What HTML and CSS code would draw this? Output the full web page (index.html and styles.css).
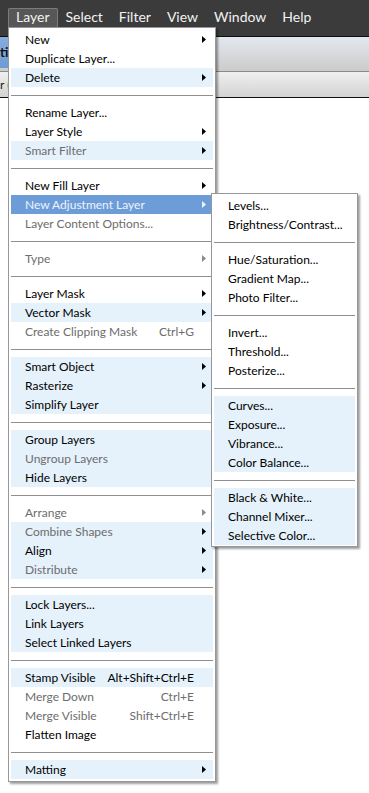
FILE: index.html
```html
<!DOCTYPE html>
<html>
<head>
<meta charset="utf-8">
<link rel="stylesheet" href="styles.css">
</head>
<body>
<div class="app">
  <div class="menubar">
    <span class="mb-item active">Layer</span>
    <span class="mb-item">Select</span>
    <span class="mb-item">Filter</span>
    <span class="mb-item">View</span>
    <span class="mb-item">Window</span>
    <span class="mb-item">Help</span>
  </div>
  <div class="tabbar"><span class="doc-tab">ti</span></div>
  <div class="optbar"><span class="opt-text">r (</span></div>
  <div class="canvas"></div>
</div>

<div class="menu main-menu">
  <div class="item"><span class="label">New</span><svg class="arr" viewBox="0 0 4 7"><polygon points="0,0 4,3.5 0,7"/></svg></div>
  <div class="item"><span class="label">Duplicate Layer...</span><span class="arr-space"></span></div>
  <div class="item bg"><span class="label">Delete</span><svg class="arr" viewBox="0 0 4 7"><polygon points="0,0 4,3.5 0,7"/></svg></div>
  <div class="sep"></div>
  <div class="item"><span class="label">Rename Layer...</span><span class="arr-space"></span></div>
  <div class="item"><span class="label">Layer Style</span><svg class="arr" viewBox="0 0 4 7"><polygon points="0,0 4,3.5 0,7"/></svg></div>
  <div class="item bg dis"><span class="label">Smart Filter</span><svg class="arr" viewBox="0 0 4 7"><polygon points="0,0 4,3.5 0,7"/></svg></div>
  <div class="sep"></div>
  <div class="item"><span class="label">New Fill Layer</span><svg class="arr" viewBox="0 0 4 7"><polygon points="0,0 4,3.5 0,7"/></svg></div>
  <div class="item hl"><span class="label">New Adjustment Layer</span><svg class="arr" viewBox="0 0 4 7"><polygon points="0,0 4,3.5 0,7"/></svg></div>
  <div class="item dis"><span class="label">Layer Content Options...</span><span class="arr-space"></span></div>
  <div class="sep"></div>
  <div class="item dis"><span class="label">Type</span><svg class="arr gray" viewBox="0 0 4 7"><polygon points="0,0 4,3.5 0,7"/></svg></div>
  <div class="sep"></div>
  <div class="item"><span class="label">Layer Mask</span><svg class="arr" viewBox="0 0 4 7"><polygon points="0,0 4,3.5 0,7"/></svg></div>
  <div class="item bg"><span class="label">Vector Mask</span><svg class="arr" viewBox="0 0 4 7"><polygon points="0,0 4,3.5 0,7"/></svg></div>
  <div class="item dis"><span class="label">Create Clipping Mask</span><span class="key">Ctrl+G</span><span class="arr-space"></span></div>
  <div class="sep"></div>
  <div class="item bg"><span class="label">Smart Object</span><svg class="arr" viewBox="0 0 4 7"><polygon points="0,0 4,3.5 0,7"/></svg></div>
  <div class="item bg"><span class="label">Rasterize</span><svg class="arr" viewBox="0 0 4 7"><polygon points="0,0 4,3.5 0,7"/></svg></div>
  <div class="item bg"><span class="label">Simplify Layer</span><span class="arr-space"></span></div>
  <div class="sep"></div>
  <div class="item bg"><span class="label">Group Layers</span><span class="arr-space"></span></div>
  <div class="item bg dis"><span class="label">Ungroup Layers</span><span class="arr-space"></span></div>
  <div class="item bg"><span class="label">Hide Layers</span><span class="arr-space"></span></div>
  <div class="sep"></div>
  <div class="item dis"><span class="label">Arrange</span><svg class="arr gray" viewBox="0 0 4 7"><polygon points="0,0 4,3.5 0,7"/></svg></div>
  <div class="item bg dis"><span class="label">Combine Shapes</span><svg class="arr" viewBox="0 0 4 7"><polygon points="0,0 4,3.5 0,7"/></svg></div>
  <div class="item bg"><span class="label">Align</span><svg class="arr" viewBox="0 0 4 7"><polygon points="0,0 4,3.5 0,7"/></svg></div>
  <div class="item bg dis"><span class="label">Distribute</span><svg class="arr" viewBox="0 0 4 7"><polygon points="0,0 4,3.5 0,7"/></svg></div>
  <div class="sep"></div>
  <div class="item bg"><span class="label">Lock Layers...</span><span class="arr-space"></span></div>
  <div class="item bg"><span class="label">Link Layers</span><span class="arr-space"></span></div>
  <div class="item bg"><span class="label">Select Linked Layers</span><span class="arr-space"></span></div>
  <div class="sep"></div>
  <div class="item bg"><span class="label">Stamp Visible</span><span class="key">Alt+Shift+Ctrl+E</span><span class="arr-space"></span></div>
  <div class="item dis"><span class="label">Merge Down</span><span class="key">Ctrl+E</span><span class="arr-space"></span></div>
  <div class="item dis"><span class="label">Merge Visible</span><span class="key">Shift+Ctrl+E</span><span class="arr-space"></span></div>
  <div class="item"><span class="label">Flatten Image</span><span class="arr-space"></span></div>
  <div class="sep"></div>
  <div class="item bg"><span class="label">Matting</span><svg class="arr" viewBox="0 0 4 7"><polygon points="0,0 4,3.5 0,7"/></svg></div>
</div>

<div class="menu sub-menu">
  <div class="item"><span class="label">Levels...</span></div>
  <div class="item"><span class="label">Brightness/Contrast...</span></div>
  <div class="sep"></div>
  <div class="item"><span class="label">Hue/Saturation...</span></div>
  <div class="item"><span class="label">Gradient Map...</span></div>
  <div class="item"><span class="label">Photo Filter...</span></div>
  <div class="sep"></div>
  <div class="item"><span class="label">Invert...</span></div>
  <div class="item"><span class="label">Threshold...</span></div>
  <div class="item"><span class="label">Posterize...</span></div>
  <div class="sep"></div>
  <div class="item bg"><span class="label">Curves...</span></div>
  <div class="item bg"><span class="label">Exposure...</span></div>
  <div class="item bg"><span class="label">Vibrance...</span></div>
  <div class="item bg"><span class="label">Color Balance...</span></div>
  <div class="sep"></div>
  <div class="item bg"><span class="label">Black &amp; White...</span></div>
  <div class="item bg"><span class="label">Channel Mixer...</span></div>
  <div class="item bg"><span class="label">Selective Color...</span></div>
</div>
</body>
</html>
```
FILE: styles.css
```css
html, body {
  margin: 0;
  padding: 0;
  background: #ffffff;
}
body {
  font-family: Lato, "Open Sans", sans-serif;
  font-size: 12px;
  color: #000;
  width: 369px;
  height: 793px;
  overflow: hidden;
  position: relative;
}

.app {
  display: flex;
  flex-direction: column;
}

/* top application menu bar */
.menubar {
  background: #3b3b3b;
  border-bottom: 1px solid #0e0e0e;
  box-sizing: border-box;
  height: 37px;
  display: flex;
  align-items: flex-start;
  padding: 8px 0 0 8px;
}
.mb-item {
  font-size: 14px;
  color: #f2f2f2;
  height: 19px;
  line-height: 18px;
  padding: 0 8px;
  box-sizing: border-box;
}
.mb-item.active {
  background: #575757;
  box-shadow: inset 0 0 0 1px #7b7b7b;
  border-radius: 2px;
  height: 20px;
}

/* document tab bar */
.tabbar {
  height: 35px;
  background: linear-gradient(#e3e7ef, #cbcbcb);
  border-bottom: 1px solid #8a8a8a;
  box-sizing: border-box;
  display: flex;
}
.doc-tab {
  width: 60px;
  background: linear-gradient(#86acdc, #6e9bd4);
  margin: 0 0 3px 0;
  font-weight: bold;
  font-size: 13px;
  line-height: 30px;
  color: #111;
}

/* options bar */
.optbar {
  height: 26px;
  background: linear-gradient(#efefef, #d3d3d3);
  border-bottom: 1px solid #111;
  box-sizing: border-box;
}
.opt-text {
  display: block;
  line-height: 25px;
  font-size: 12px;
  color: #222;
}

/* menus */
.menu {
  position: absolute;
  background: #fff;
  border: 1px solid #979797;
  box-shadow: 2px 2px 2px rgba(0, 0, 0, 0.38);
  box-sizing: border-box;
}
.main-menu {
  left: 8px;
  top: 27px;
  width: 208px;
  padding: 2px 2px 2px 2px;
}
.sub-menu {
  left: 211px;
  top: 193px;
  width: 147px;
  padding: 2px 2px 1px 2px;
}

.item {
  height: 19px;
  display: flex;
  align-items: center;
  padding: 0 7px 0 14px;
  white-space: nowrap;
  line-height: 19px;
}
.item .label {
  flex: 1;
}
.item .key {
  margin-right: 8px;
}
.arr {
  width: 4px;
  height: 7px;
  fill: #000;
  flex: none;
}
.arr.gray {
  fill: #8a8a8a;
}
.arr-space {
  width: 4px;
  flex: none;
}
.item.bg {
  background: #e5f1fb;
}
.item.dis {
  color: #6d6d6d;
}
.item.hl {
  background: #6c9dd9;
  color: #eef3fa;
}
.item.hl .arr {
  fill: #eef3fa;
}

.sep {
  height: 16px;
  position: relative;
}
.sep::after {
  content: "";
  position: absolute;
  left: 0;
  right: 0;
  top: 8px;
  height: 1px;
  background: #8f8f8f;
}
```
